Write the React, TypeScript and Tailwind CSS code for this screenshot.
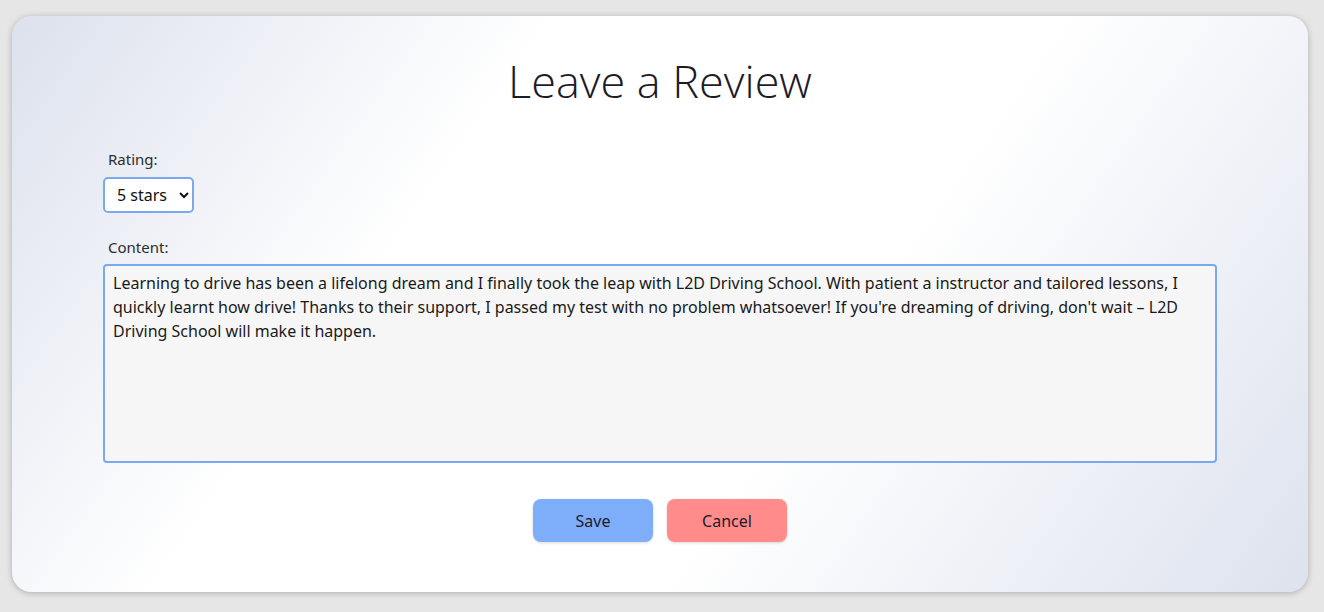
export default function App() {
  const review =
    "Learning to drive has been a lifelong dream and I finally took the leap with L2D Driving School. With patient a instructor and tailored lessons, I quickly learnt how drive! Thanks to their support, I passed my test with no problem whatsoever! If you're dreaming of driving, don't wait – L2D Driving School will make it happen.";

  return (
    <div className="min-h-[612px] bg-[#e6e6e7] pl-3 pr-4 pt-4 pb-5 font-['Noto_Sans',sans-serif] text-[#222]">
      {/* Review card */}
      <div className="rounded-[20px] bg-[linear-gradient(125deg,#dce1ed_0%,#ffffff_32%,#ffffff_62%,#dde2ee_100%)] shadow-[0_1px_6px_rgba(0,0,0,0.25)] px-[91px] pt-[37px] pb-[50px]">
        <h1 className="text-center font-['Open_Sans',sans-serif] font-light text-[45px] leading-[56px] text-[#1e1b29]">
          Leave a Review
        </h1>

        <form className="mt-[40px] flex flex-col" onSubmit={(e) => e.preventDefault()}>
          <label className="pl-[5px] text-[15px] leading-5 text-[#2d2d2d]">Rating:</label>
          <select
            defaultValue="5"
            className="mt-2 w-[91px] h-[36px] rounded-[5px] border-2 border-[#7aa9f2] bg-white pl-[8px] text-base text-[#111] outline-none"
          >
            <option value="1">1 star</option>
            <option value="2">2 stars</option>
            <option value="3">3 stars</option>
            <option value="4">4 stars</option>
            <option value="5">5 stars</option>
          </select>

          <label className="mt-[24px] pl-[5px] text-[15px] leading-5 text-[#2d2d2d]">Content:</label>
          <textarea
            defaultValue={review}
            className="mt-[7px] h-[199px] w-full resize-none rounded-[4px] border-2 border-[#7aa9f2] bg-[#f6f6f6] px-2 py-[5px] text-base leading-6 text-[#1a1a1a] outline-none"
          />

          <div className="mt-9 flex justify-center gap-[14px]">
            <button
              type="submit"
              className="h-[43px] w-[120px] rounded-lg bg-[#7eaefa] text-base text-[#1b1b2b] shadow-[0_1px_3px_rgba(0,0,0,0.15)]"
            >
              Save
            </button>
            <button
              type="button"
              className="h-[43px] w-[120px] rounded-lg bg-[#ff8b8b] text-base text-[#1b1b2b] shadow-[0_1px_3px_rgba(0,0,0,0.15)]"
            >
              Cancel
            </button>
          </div>
        </form>
      </div>
    </div>
  );
}
